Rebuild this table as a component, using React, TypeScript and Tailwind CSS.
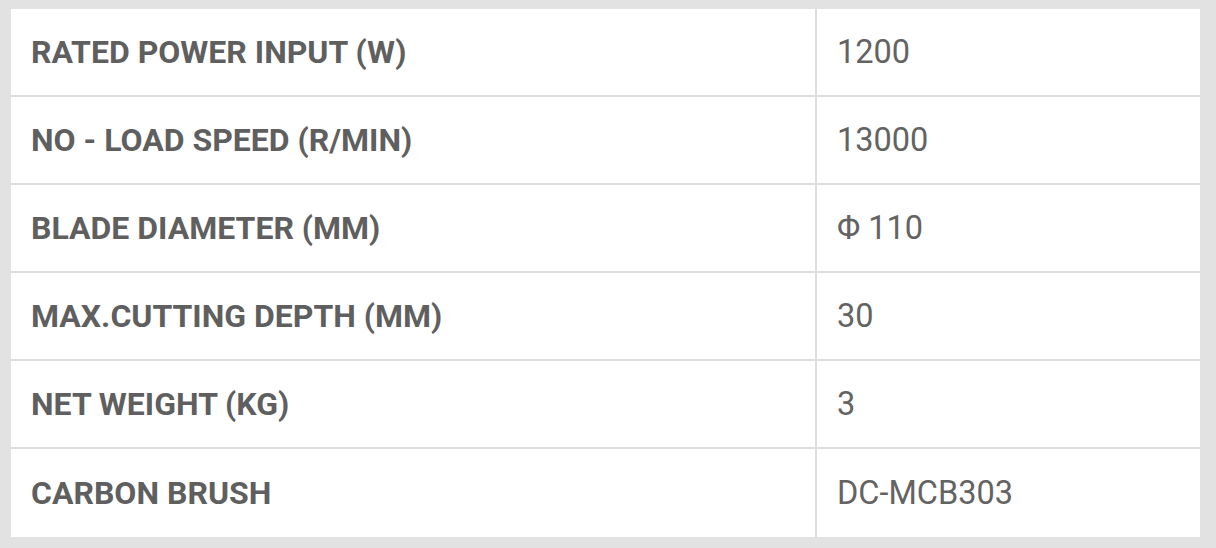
import React from 'react';

const specs: [string, string][] = [
  ['RATED POWER INPUT (W)', '1200'],
  ['NO - LOAD SPEED (R/MIN)', '13000'],
  ['BLADE DIAMETER (MM)', 'Φ 110'],
  ['MAX.CUTTING DEPTH (MM)', '30'],
  ['NET WEIGHT (KG)', '3'],
  ['CARBON BRUSH', 'DC-MCB303'],
];

const App: React.FC = () => {
  return (
    <div className="w-[1216px] h-[548px] bg-[#e2e2e2] pt-[9px] pl-[11px] pr-[16px] font-['Roboto',sans-serif]">
      <div className="bg-white flex flex-col">
        {specs.map(([label, value], i) => (
          <div
            key={label}
            className={`flex h-[88px] ${i < specs.length - 1 ? 'border-b-2 border-[#dddddd]' : ''}`}
          >
            <div className="w-[806px] border-r-2 border-[#dddddd] flex items-center pl-[20px] text-[32px] font-bold text-[#5f5f5f]">
              {label}
            </div>
            <div className="flex-1 flex items-center pl-[20px] text-[32.5px] text-[#636363]">
              {value}
            </div>
          </div>
        ))}
      </div>
    </div>
  );
};

export default App;
